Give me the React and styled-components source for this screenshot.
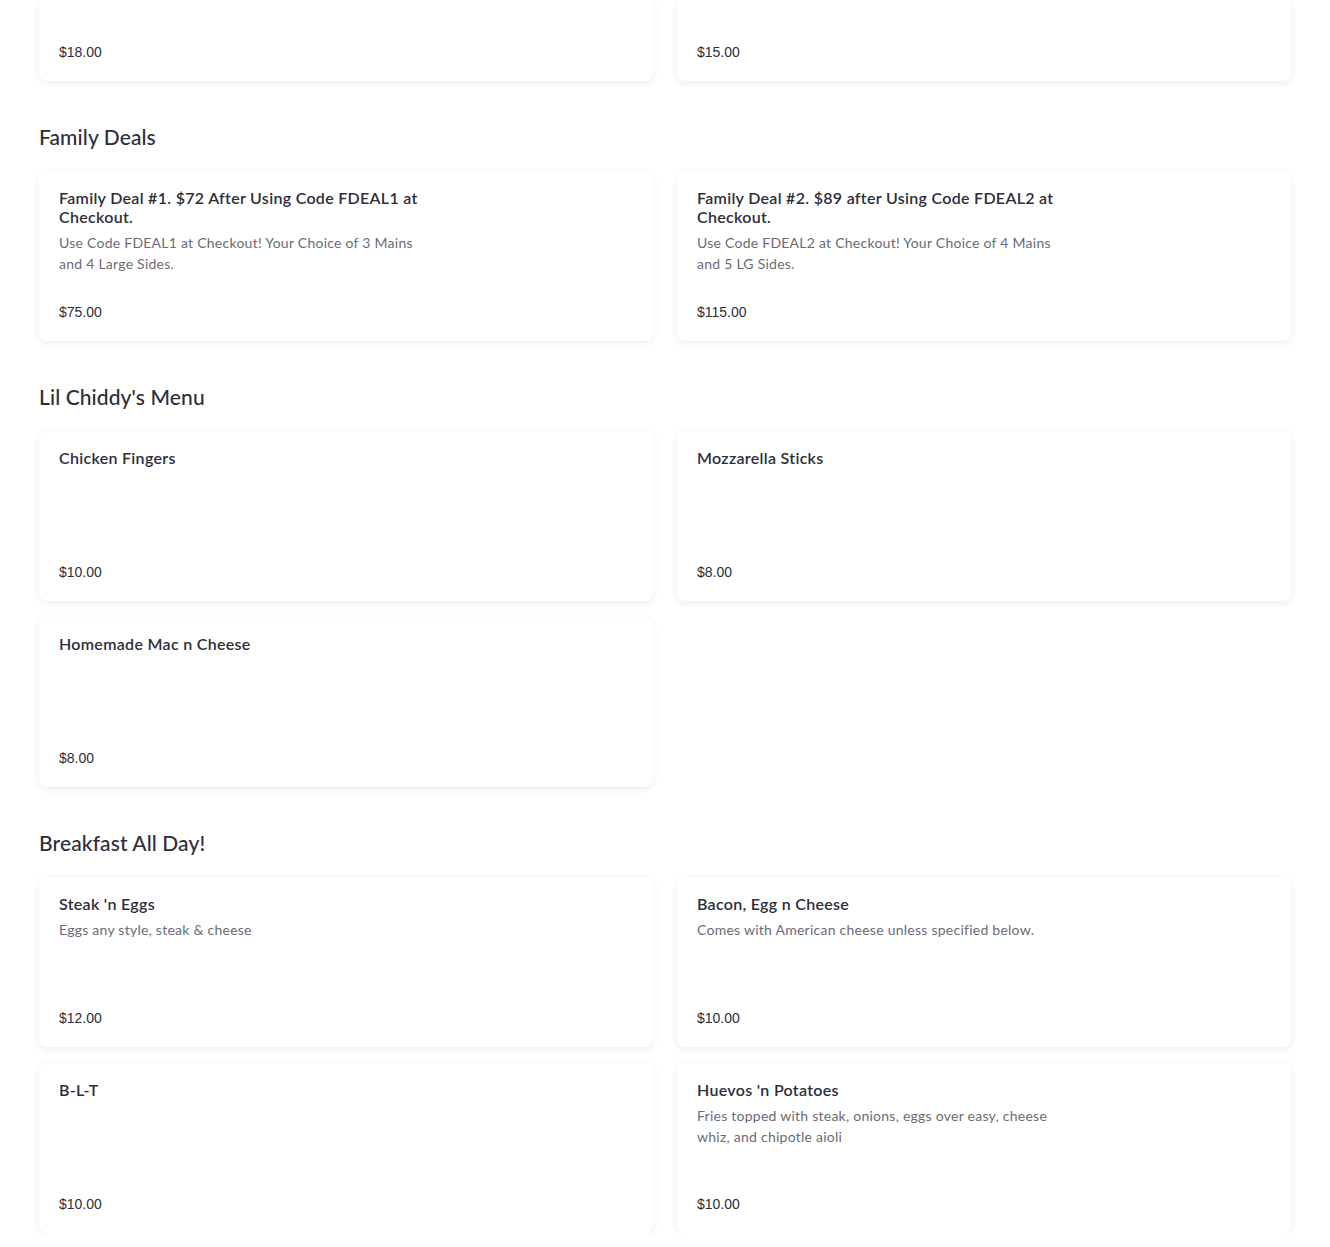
import React from 'react'
import styled, { createGlobalStyle } from 'styled-components'

const GlobalStyle = createGlobalStyle`
  html, body {
    margin: 0;
    padding: 0;
    background: #ffffff;
  }
  body {
    font-family: Lato, "Open Sans", sans-serif;
    color: #2d2e3a;
  }
`

const Page = styled.div`
  padding: 0 39px;
  display: flex;
  flex-direction: column;
`

const Section = styled.section`
  display: flex;
  flex-direction: column;
  margin-top: ${(p) => (p.$first ? '0' : '44px')};
`

const SectionTitle = styled.h2`
  margin: 0 0 22px 0;
  font-size: 21px;
  line-height: 24px;
  font-weight: 500;
  letter-spacing: 0.1px;
  color: #2d2e3a;
`

const Grid = styled.div`
  display: grid;
  grid-template-columns: 1fr 1fr;
  column-gap: 24px;
  row-gap: 16px;
`

const Card = styled.div`
  background: #fff;
  border-radius: ${(p) => (p.$cut ? '0 0 8px 8px' : '8px')};
  box-shadow: 0 2px 7px rgba(0, 0, 0, 0.08);
  padding: ${(p) => (p.$cut ? '0 20px 19px' : '17px 20px 19px')};
  min-height: ${(p) => (p.$cut ? '81px' : '170px')};
  box-sizing: border-box;
  display: flex;
  flex-direction: column;
`

const Title = styled.div`
  font-size: 16px;
  line-height: 19px;
  font-weight: 600;
  letter-spacing: 0.3px;
  color: #2d2e3a;
  max-width: 380px;
`

const Desc = styled.div`
  margin-top: 6px;
  font-size: 14px;
  line-height: 21px;
  letter-spacing: 0.25px;
  color: #6b6b75;
  max-width: 380px;
`

const Price = styled.div`
  margin-top: auto;
  font-family: "Liberation Sans", Arial, sans-serif;
  font-size: 14px;
  line-height: 20px;
  color: #2d2e3a;
`

const sections = [
  {
    title: 'Family Deals',
    items: [
      {
        name: 'Family Deal #1. $72 After Using Code FDEAL1 at Checkout.',
        desc: 'Use Code FDEAL1 at Checkout! Your Choice of 3 Mains and 4 Large Sides.',
        price: '$75.00',
      },
      {
        name: 'Family Deal #2. $89 after Using Code FDEAL2 at Checkout.',
        desc: 'Use Code FDEAL2 at Checkout! Your Choice of 4 Mains and 5 LG Sides.',
        price: '$115.00',
      },
    ],
  },
  {
    title: "Lil Chiddy's Menu",
    items: [
      { name: 'Chicken Fingers', price: '$10.00' },
      { name: 'Mozzarella Sticks', price: '$8.00' },
      { name: 'Homemade Mac n Cheese', price: '$8.00' },
    ],
  },
  {
    title: 'Breakfast All Day!',
    items: [
      { name: "Steak 'n Eggs", desc: 'Eggs any style, steak & cheese', price: '$12.00' },
      { name: 'Bacon, Egg n Cheese', desc: 'Comes with American cheese unless specified below.', price: '$10.00' },
      { name: 'B-L-T', price: '$10.00' },
      {
        name: "Huevos 'n Potatoes",
        desc: 'Fries topped with steak, onions, eggs over easy, cheese whiz, and chipotle aioli',
        price: '$10.00',
      },
    ],
  },
]

const MenuItem = ({ item }) => (
  <Card>
    <Title>{item.name}</Title>
    {item.desc && <Desc>{item.desc}</Desc>}
    <Price>{item.price}</Price>
  </Card>
)

export default function App() {
  return (
    <Page>
      <GlobalStyle />
      {/* tail of the section above, scrolled past */}
      <Section $first>
        <Grid>
          <Card $cut><Price>$18.00</Price></Card>
          <Card $cut><Price>$15.00</Price></Card>
        </Grid>
      </Section>
      {sections.map((s) => (
        <Section key={s.title}>
          <SectionTitle>{s.title}</SectionTitle>
          <Grid>
            {s.items.map((it) => (
              <MenuItem key={it.name} item={it} />
            ))}
          </Grid>
        </Section>
      ))}
    </Page>
  )
}
